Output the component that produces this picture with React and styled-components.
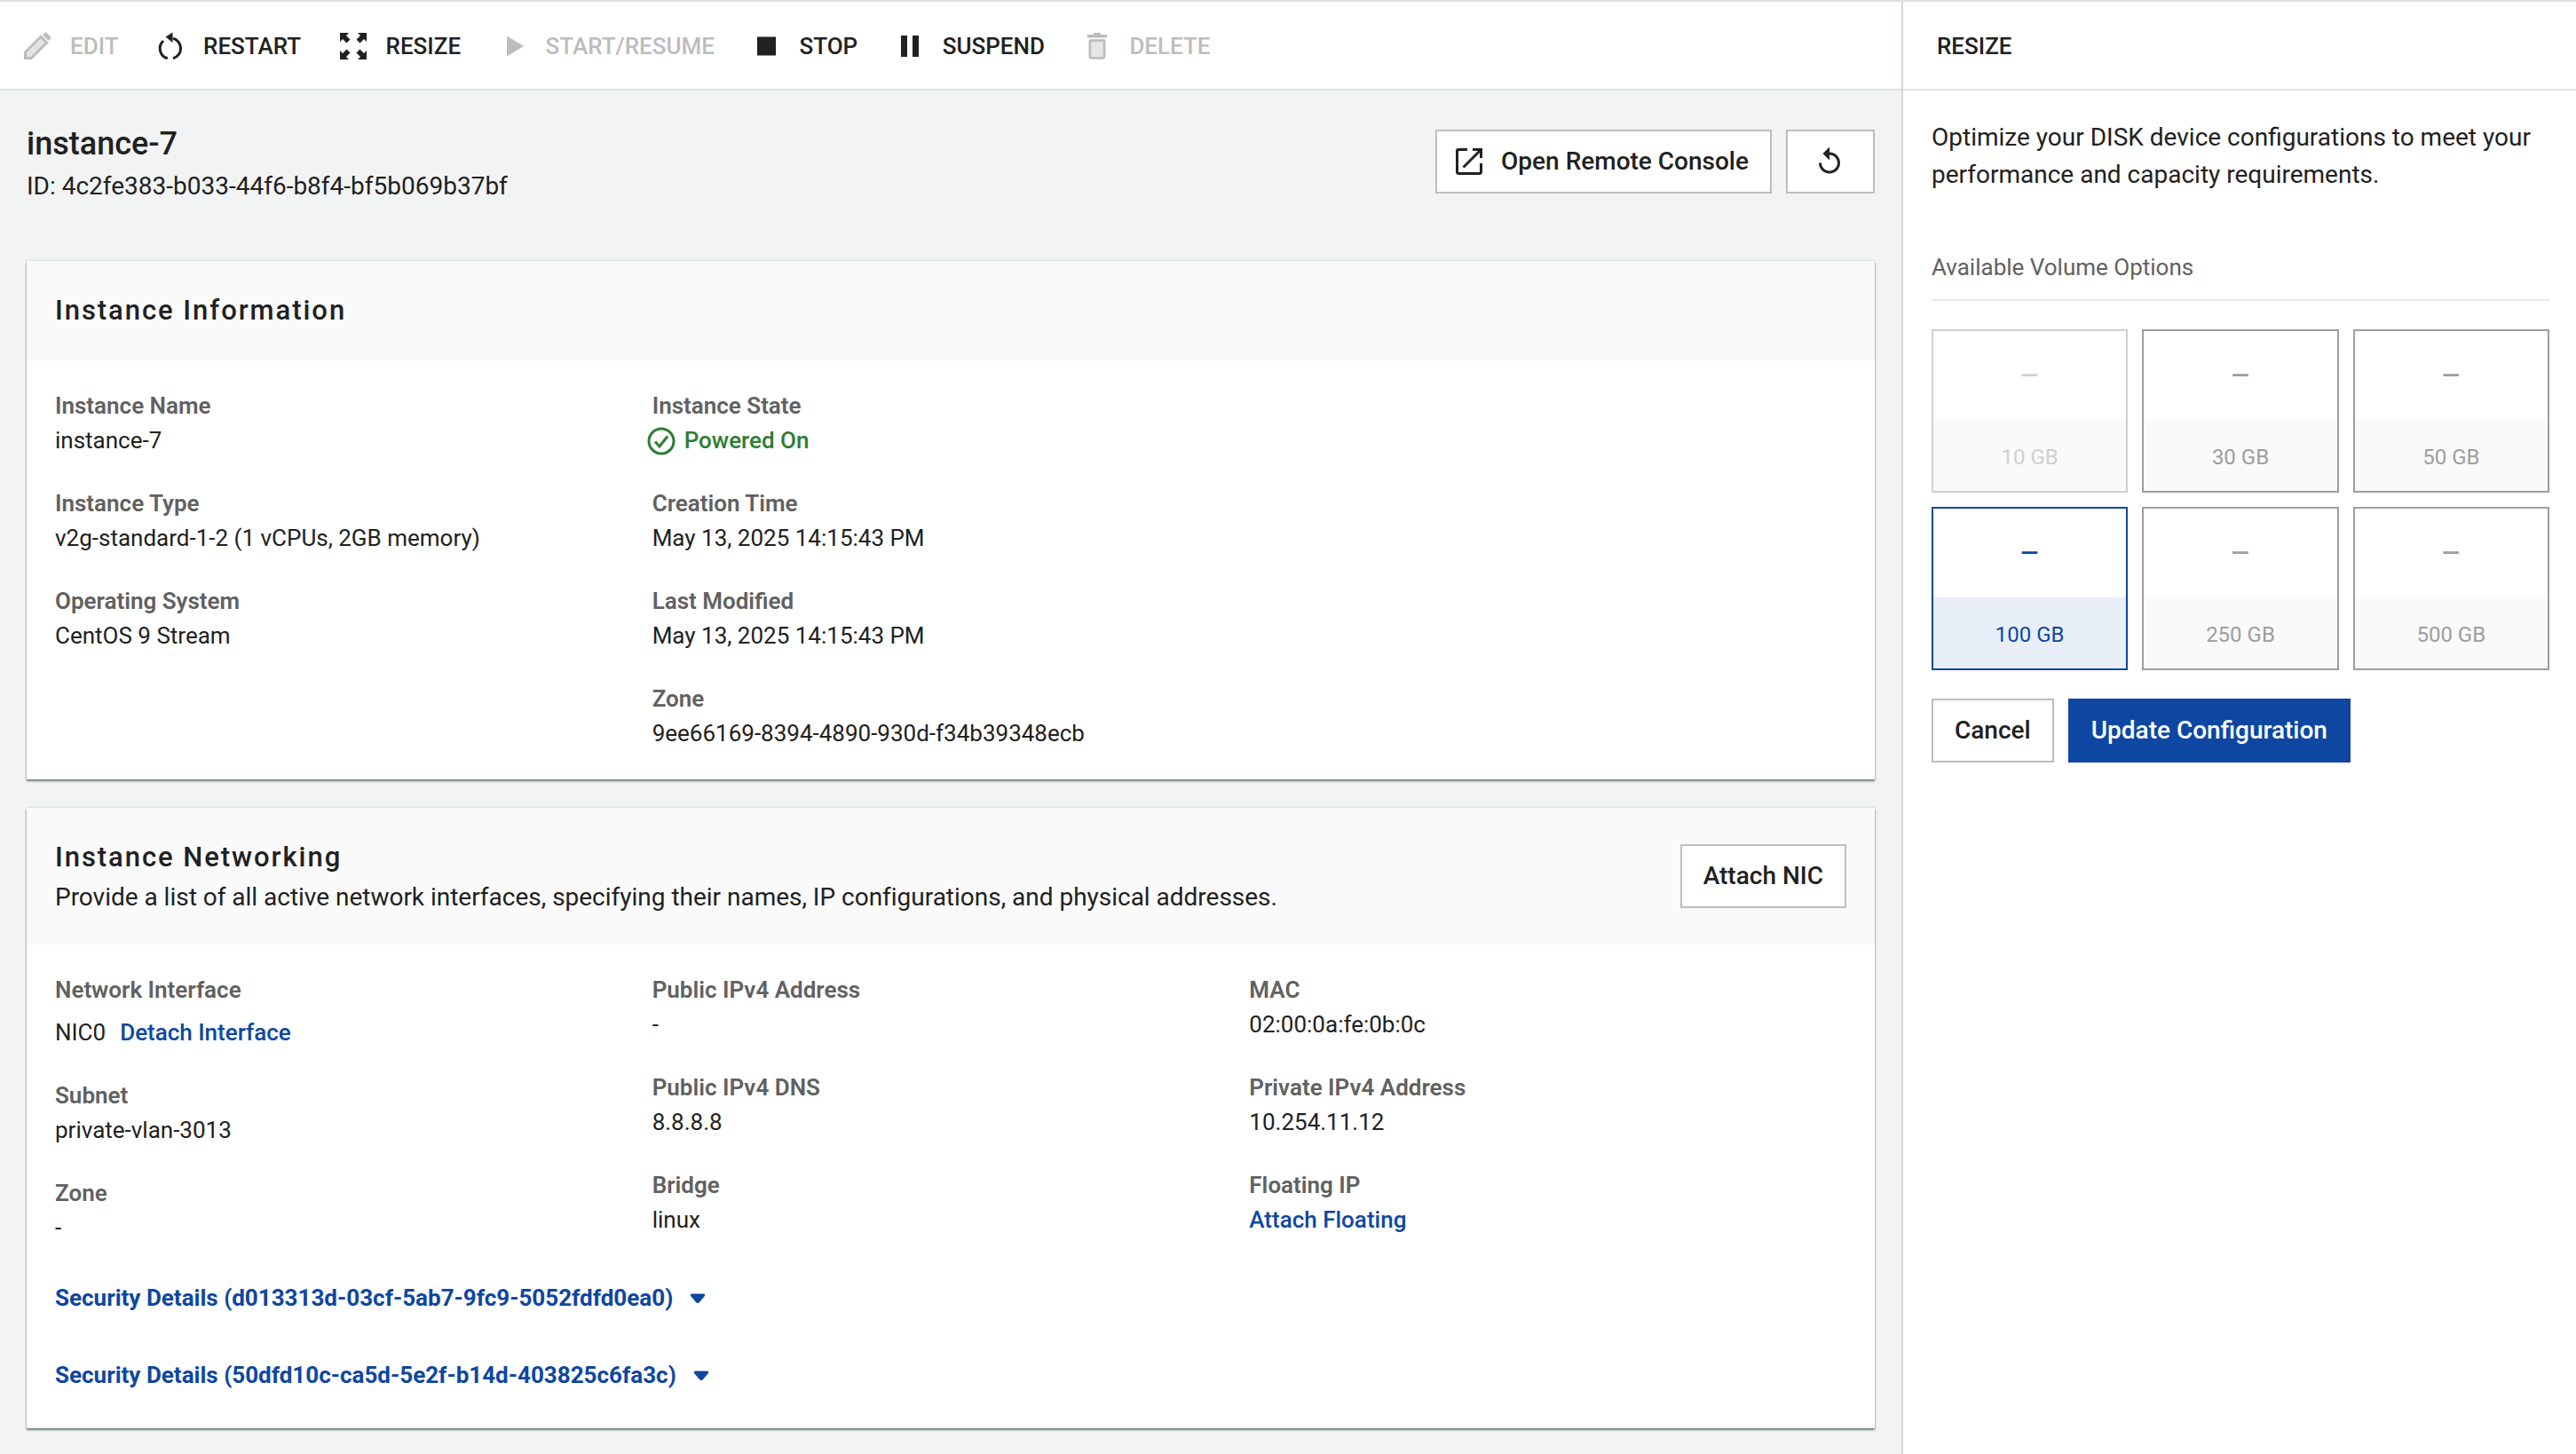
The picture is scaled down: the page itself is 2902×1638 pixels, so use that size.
import React from "react";
import styled, { createGlobalStyle } from "styled-components";

const Global = createGlobalStyle`
  html, body { margin: 0; padding: 0; background: #fff; }
  body { font-family: Roboto, "Noto Sans", sans-serif; color: #212121; -webkit-font-smoothing: antialiased; }
  * { box-sizing: border-box; }
`;

const Page = styled.div`
  display: flex;
  width: 2902px;
  height: 1638px;
  overflow: hidden;
  border-top: 2px solid #e0e0e0;
  background: #fff;
`;
const Main = styled.main`
  width: 2144px;
  flex: none;
  display: flex;
  flex-direction: column;
  background: #f2f4f4;
  border-right: 2px solid #d3d7d8;
`;
const Toolbar = styled.div`
  display: flex;
  align-items: center;
  gap: 42.5px;
  height: 100px;
  flex: none;
  padding: 2px 0 0 26px;
  background: #fff;
  border-bottom: 2px solid #e0e0e0;
`;
const ToolItem = styled.div`
  display: flex;
  align-items: center;
  gap: 21px;
  font-size: 26px;
  font-weight: 500;
  line-height: 32px;
  color: ${(p) => (p.$disabled ? "#bdbdbd" : "#212121")};
`;
const ToolIcon = styled.svg`
  width: 32px;
  height: 32px;
  flex: none;
  fill: currentColor;
`;
const Content = styled.div`
  padding: 0 30px;
  flex: 1;
`;
const PageHead = styled.header`
  display: flex;
  justify-content: space-between;
  align-items: flex-start;
  padding: 38px 0 64px;
`;
const HeadText = styled.div`
  display: flex;
  flex-direction: column;
  gap: 6px;
`;
const InstanceName = styled.h1`
  margin: 0;
  font-size: 36px;
  font-weight: 500;
  line-height: 44px;
  color: #212121;
`;
const InstanceId = styled.div`
  font-size: 28px;
  line-height: 40px;
  color: #212121;
`;
const HeadActions = styled.div`
  display: flex;
  gap: 16px;
  margin-top: 6px;
`;
const Button = styled.button`
  display: inline-flex;
  align-items: center;
  justify-content: center;
  gap: 20px;
  height: 72px;
  padding: 0 24px;
  border: 2px solid ${(p) => (p.$primary ? "#0e47a1" : "#bdbdbd")};
  background: ${(p) => (p.$primary ? "#0e47a1" : "#fff")};
  color: ${(p) => (p.$primary ? "#fff" : "#212121")};
  font-family: inherit;
  font-size: 28px;
  font-weight: 500;
  line-height: 40px;
`;
const ConsoleButton = styled(Button)`
  padding-left: 20px;
`;
const IconButton = styled(Button)`
  width: 100px;
  padding: 0 3px 0 0;
`;
const BtnIcon = styled.svg`
  width: ${(p) => p.$size || 32}px;
  height: ${(p) => p.$size || 32}px;
  flex: none;
`;
const Card = styled.section`
  background: #fff;
  box-shadow: 0 2px 2px rgba(70, 85, 90, 0.75), 0 0 2px rgba(120, 135, 140, 0.45);
  & + & { margin-top: 32px; }
`;
const CardHead = styled.div`
  display: flex;
  justify-content: space-between;
  align-items: center;
  min-height: 112px;
  padding: ${(p) => (p.$tall ? "36px 32px 33px" : "0 32px")};
  background: #fafafa;
`;
const CardTitle = styled.h2`
  margin: 0;
  font-size: 31px;
  font-weight: 500;
  line-height: 40px;
  letter-spacing: 1.95px;
  color: #212121;
`;
const CardSub = styled.p`
  margin: 5px 0 0;
  font-size: 28px;
  line-height: 40px;
  letter-spacing: -0.015px;
  color: #212121;
`;
const AttachButton = styled(Button)`
  margin-top: -3px;
`;
const CardBody = styled.div`
  padding: 32px 32px ${(p) => p.$bottom || 32}px;
`;
const Columns = styled.div`
  display: grid;
  grid-template-columns: repeat(3, 1fr);
`;
const Column = styled.div`
  display: flex;
  flex-direction: column;
  gap: 32px;
`;
const Field = styled.div`
  display: flex;
  flex-direction: column;
`;
const Label = styled.div`
  font-size: 26px;
  font-weight: 600;
  line-height: 39px;
  color: #616161;
`;
const Value = styled.div`
  font-size: 26px;
  line-height: 39px;
  color: #212121;
`;
const LinkValue = styled(Value)`
  display: flex;
  gap: 16px;
  padding-top: 8px;
  line-height: 40px;
`;
const StatusValue = styled(Value)`
  display: flex;
  align-items: center;
  gap: 10px;
  margin-left: -6px;
  color: #2e7d32;
  font-weight: 500;
`;
const TextLink = styled.a`
  color: #0e47a1;
  font-weight: 500;
  text-decoration: none;
`;
const SecurityList = styled.div`
  display: flex;
  flex-direction: column;
  gap: 48px;
  margin-top: 40px;
`;
const SecurityRow = styled.a`
  display: flex;
  align-items: center;
  gap: 19px;
  font-size: 26px;
  font-weight: 700;
  line-height: 39px;
  color: #0e47a1;
`;
const Caret = styled.svg`
  width: 18px;
  height: 12px;
  fill: #0e47a1;
  flex: none;
`;
const Side = styled.aside`
  flex: 1;
  display: flex;
  flex-direction: column;
  background: #fff;
`;
const SideHead = styled.div`
  display: flex;
  align-items: center;
  height: 100px;
  flex: none;
  padding: 2px 0 0 38px;
  border-bottom: 2px solid #e0e0e0;
  font-size: 26px;
  font-weight: 500;
  color: #212121;
`;
const SideBody = styled.div`
  padding: 32px 30px 32px 32px;
`;
const Intro = styled.p`
  margin: 0;
  font-size: 28px;
  line-height: 42px;
  color: #212121;
`;
const OptionsTitle = styled.div`
  margin-top: 63px;
  padding-bottom: 16px;
  border-bottom: 2px solid #e5e9ec;
  font-size: 26px;
  line-height: 40px;
  color: #616161;
`;
const OptionGrid = styled.div`
  display: grid;
  grid-template-columns: repeat(3, 1fr);
  gap: 16px;
  margin-top: 32px;
`;
const tone = (p) => (p.$selected ? "#0e47a1" : p.$disabled ? "#d0d0d0" : "#9e9e9e");
const Option = styled.div`
  display: flex;
  flex-direction: column;
  height: 184px;
  border: 2px solid ${tone};
  color: ${tone};
  background: #fff;
`;
const OptionDash = styled.div`
  display: flex;
  align-items: center;
  justify-content: center;
  height: 100px;
  padding-top: 1px;
  font-size: 36px;
`;
const OptionSize = styled.div`
  flex: 1;
  display: flex;
  align-items: center;
  justify-content: center;
  padding-top: 4px;
  background: ${(p) => (p.$selected ? "#e8eff9" : "#fafafa")};
  font-size: 24px;
`;
const Actions = styled.div`
  display: flex;
  gap: 16px;
  margin-top: 32px;
`;

const Pencil = () => (
  <ToolIcon viewBox="0 0 32 32">
    <path d="M2.5 22.8 L20 5.3 L26.7 12 L9.2 29.5 L2.5 29.5 Z" fill="#e3e3e3" stroke="currentColor" strokeWidth="3" />
    <path d="M22 3.3 L24.4 1 Q25.4 0 26.4 1 L31 5.6 Q32 6.6 31 7.6 L28.7 10 Z" />
  </ToolIcon>
);
const RestartIcon = () => (
  <ToolIcon viewBox="0 0 32 32">
    <path d="M19 7.3 A11.6 11.6 0 0 1 19 29.7" fill="none" stroke="currentColor" strokeWidth="3" />
    <path d="M12.8 29.8 A11.6 11.6 0 0 1 8 10" fill="none" stroke="currentColor" strokeWidth="3" />
    <path d="M18.5 0.5 V12 L10.5 5.5 Z" />
  </ToolIcon>
);
const ResizeIcon = () => (
  <ToolIcon viewBox="0 0 32 32">
    <path d="M1 1 H11 L8 4 L12.5 8.5 L8.5 12.5 L4 8 L1 11 Z" />
    <path d="M31 1 H21 L24 4 L19.5 8.5 L23.5 12.5 L28 8 L31 11 Z" />
    <path d="M1 31 H11 L8 28 L12.5 23.5 L8.5 19.5 L4 24 L1 21 Z" />
    <path d="M31 31 H21 L24 28 L19.5 23.5 L23.5 19.5 L28 24 L31 21 Z" />
  </ToolIcon>
);
const PlayIcon = () => (
  <ToolIcon viewBox="0 0 32 32">
    <path d="M9 4.5 L28 16 L9 27.5 Z" />
  </ToolIcon>
);
const StopIcon = () => (
  <ToolIcon viewBox="0 0 32 32">
    <rect x="6" y="5.5" width="21" height="21" />
  </ToolIcon>
);
const PauseIcon = () => (
  <ToolIcon viewBox="0 0 32 32">
    <rect x="6" y="4" width="7" height="24" />
    <rect x="19" y="4" width="7" height="24" />
  </ToolIcon>
);
const TrashIcon = () => (
  <ToolIcon viewBox="0 0 32 32">
    <path d="M13 1 H21 V3 H28 V6.5 H6 V3 H13 Z" />
    <path d="M7 9 H25 V29 Q25 31 23 31 H9 Q7 31 7 29 Z" fill="#e6e6e6" stroke="currentColor" strokeWidth="3" strokeLinejoin="round" transform="translate(2.6 1.5) scale(0.9)" />
  </ToolIcon>
);
const OpenIcon = () => (
  <BtnIcon viewBox="0 0 32 32" fill="none" stroke="#212121" strokeWidth="3">
    <path d="M14 2.5 H4 A1.5 1.5 0 0 0 2.5 4 V28 A1.5 1.5 0 0 0 4 29.5 H28 A1.5 1.5 0 0 0 29.5 28 V18" />
    <path d="M9.5 22.5 L28 4" />
    <path d="M20 2.5 H29.5 V12" />
  </BtnIcon>
);
const ReplayIcon = () => (
  <BtnIcon $size={36} viewBox="0 0 24 24" fill="#212121">
    <path d="M12 5V1L7 6l5 5V7c3.31 0 6 2.69 6 6s-2.69 6-6 6-6-2.69-6-6H4c0 4.42 3.58 8 8 8s8-3.58 8-8-3.58-8-8-8z" />
  </BtnIcon>
);
const CheckIcon = () => (
  <BtnIcon $size={32} viewBox="0 0 32 32" fill="none" stroke="#2e7d32" strokeWidth="3">
    <circle cx="16" cy="16" r="14" />
    <path d="M9 16.5 L14 22 L23 10.5" />
  </BtnIcon>
);
const CaretIcon = () => (
  <Caret viewBox="0 0 18 12">
    <path d="M3 0.5 H15 Q18.5 0.5 16.5 3.5 L11 10 Q9 12.2 7 10 L1.5 3.5 Q-0.5 0.5 3 0.5 Z" />
  </Caret>
);

const tools = [
  { label: "EDIT", Icon: Pencil, disabled: true },
  { label: "RESTART", Icon: RestartIcon },
  { label: "RESIZE", Icon: ResizeIcon },
  { label: "START/RESUME", Icon: PlayIcon, disabled: true },
  { label: "STOP", Icon: StopIcon },
  { label: "SUSPEND", Icon: PauseIcon },
  { label: "DELETE", Icon: TrashIcon, disabled: true },
];

const options = [
  { size: "10 GB", disabled: true },
  { size: "30 GB" },
  { size: "50 GB" },
  { size: "100 GB", selected: true },
  { size: "250 GB" },
  { size: "500 GB" },
];

const F = ({ label, children }) => (
  <Field>
    <Label>{label}</Label>
    <Value>{children}</Value>
  </Field>
);

export default function App() {
  return (
    <>
      <Global />
      <Page>
        <Main>
          <Toolbar>
            {tools.map(({ label, Icon, disabled }) => (
              <ToolItem key={label} $disabled={disabled}>
                <Icon />
                {label}
              </ToolItem>
            ))}
          </Toolbar>
          <Content>
            <PageHead>
              <HeadText>
                <InstanceName>instance-7</InstanceName>
                <InstanceId>ID: 4c2fe383-b033-44f6-b8f4-bf5b069b37bf</InstanceId>
              </HeadText>
              <HeadActions>
                <ConsoleButton>
                  <OpenIcon />
                  Open Remote Console
                </ConsoleButton>
                <IconButton>
                  <ReplayIcon />
                </IconButton>
              </HeadActions>
            </PageHead>

            <Card>
              <CardHead>
                <CardTitle>Instance Information</CardTitle>
              </CardHead>
              <CardBody>
                <Columns>
                  <Column>
                    <F label="Instance Name">instance-7</F>
                    <F label="Instance Type">v2g-standard-1-2 (1 vCPUs, 2GB memory)</F>
                    <F label="Operating System">CentOS 9 Stream</F>
                  </Column>
                  <Column>
                    <Field>
                      <Label>Instance State</Label>
                      <StatusValue>
                        <CheckIcon />
                        Powered On
                      </StatusValue>
                    </Field>
                    <F label="Creation Time">May 13, 2025 14:15:43 PM</F>
                    <F label="Last Modified">May 13, 2025 14:15:43 PM</F>
                    <F label="Zone">9ee66169-8394-4890-930d-f34b39348ecb</F>
                  </Column>
                </Columns>
              </CardBody>
            </Card>

            <Card>
              <CardHead $tall>
                <div>
                  <CardTitle>Instance Networking</CardTitle>
                  <CardSub>Provide a list of all active network interfaces, specifying their names, IP configurations, and physical addresses.</CardSub>
                </div>
                <AttachButton>Attach NIC</AttachButton>
              </CardHead>
              <CardBody $bottom={40}>
                <Columns>
                  <Column>
                    <Field>
                      <Label>Network Interface</Label>
                      <LinkValue>
                        NIC0
                        <TextLink>Detach Interface</TextLink>
                      </LinkValue>
                    </Field>
                    <F label="Subnet">private-vlan-3013</F>
                    <F label="Zone">-</F>
                  </Column>
                  <Column>
                    <F label="Public IPv4 Address">-</F>
                    <F label="Public IPv4 DNS">8.8.8.8</F>
                    <F label="Bridge">linux</F>
                  </Column>
                  <Column>
                    <F label="MAC">02:00:0a:fe:0b:0c</F>
                    <F label="Private IPv4 Address">10.254.11.12</F>
                    <F label="Floating IP">
                      <TextLink>Attach Floating</TextLink>
                    </F>
                  </Column>
                </Columns>
                <SecurityList>
                  <SecurityRow>
                    Security Details (d013313d-03cf-5ab7-9fc9-5052fdfd0ea0)
                    <CaretIcon />
                  </SecurityRow>
                  <SecurityRow>
                    Security Details (50dfd10c-ca5d-5e2f-b14d-403825c6fa3c)
                    <CaretIcon />
                  </SecurityRow>
                </SecurityList>
              </CardBody>
            </Card>
          </Content>
        </Main>

        <Side>
          <SideHead>RESIZE</SideHead>
          <SideBody>
            <Intro>Optimize your DISK device configurations to meet your performance and capacity requirements.</Intro>
            <OptionsTitle>Available Volume Options</OptionsTitle>
            <OptionGrid>
              {options.map((o) => (
                <Option key={o.size} $disabled={o.disabled} $selected={o.selected}>
                  <OptionDash>–</OptionDash>
                  <OptionSize $selected={o.selected}>{o.size}</OptionSize>
                </Option>
              ))}
            </OptionGrid>
            <Actions>
              <Button>Cancel</Button>
              <Button $primary>Update Configuration</Button>
            </Actions>
          </SideBody>
        </Side>
      </Page>
    </>
  );
}
